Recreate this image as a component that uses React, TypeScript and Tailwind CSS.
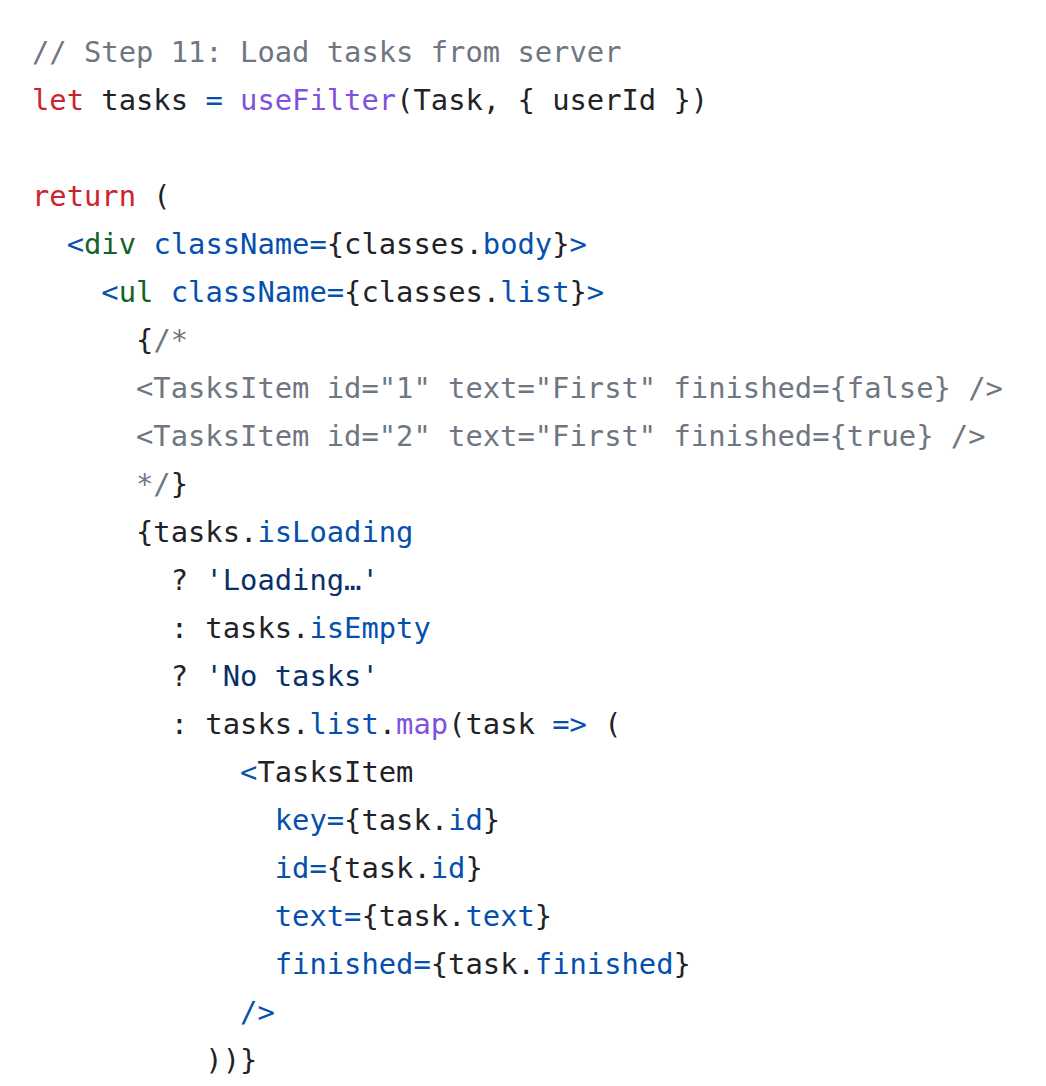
type Tok = [string, string?];

const c = {
  cm: "text-[#6e7781]",
  kw: "text-[#cf222e]",
  bl: "text-[#0550ae]",
  fn: "text-[#8250df]",
  tg: "text-[#116329]",
  st: "text-[#0a3069]",
};

const lines: Tok[][] = [
  [["// Step 11: Load tasks from server", c.cm]],
  [["let", c.kw], [" tasks "], ["=", c.bl], [" "], ["useFilter", c.fn], ["(Task, { userId })"]],
  [],
  [["return", c.kw], [" ("]],
  [["  "], ["<", c.bl], ["div", c.tg], [" "], ["className=", c.bl], ["{classes."], ["body", c.bl], ["}"], [">", c.bl]],
  [["    "], ["<", c.bl], ["ul", c.tg], [" "], ["className=", c.bl], ["{classes."], ["list", c.bl], ["}"], [">", c.bl]],
  [["      {"], ["/*", c.cm]],
  [['      <TasksItem id="1" text="First" finished={false} />', c.cm]],
  [['      <TasksItem id="2" text="First" finished={true} />', c.cm]],
  [["      */", c.cm], ["}"]],
  [["      {tasks."], ["isLoading", c.bl]],
  [["        ? "], ["'Loading…'", c.st]],
  [["        : tasks."], ["isEmpty", c.bl]],
  [["        ? "], ["'No tasks'", c.st]],
  [["        : tasks."], ["list", c.bl], ["."], ["map", c.fn], ["(task "], ["=>", c.bl], [" ("]],
  [["            "], ["<", c.bl], ["TasksItem"]],
  [["              "], ["key=", c.bl], ["{task."], ["id", c.bl], ["}"]],
  [["              "], ["id=", c.bl], ["{task."], ["id", c.bl], ["}"]],
  [["              "], ["text=", c.bl], ["{task."], ["text", c.bl], ["}"]],
  [["              "], ["finished=", c.bl], ["{task."], ["finished", c.bl], ["}"]],
  [["            "], ["/>", c.bl]],
  [["          ))}"]],
];

export default function App() {
  return (
    <div className="bg-white min-h-screen">
      <pre className="px-8 pt-7 pb-0 font-['DejaVu_Sans_Mono',monospace] text-[28.8px] leading-[48px] text-[#1f2328]">
        {lines.map((line, i) => (
          <div key={i} className="h-12 whitespace-pre">
            {line.map(([text, cls], j) => (
              <span key={j} className={cls}>
                {text}
              </span>
            ))}
          </div>
        ))}
      </pre>
    </div>
  );
}
